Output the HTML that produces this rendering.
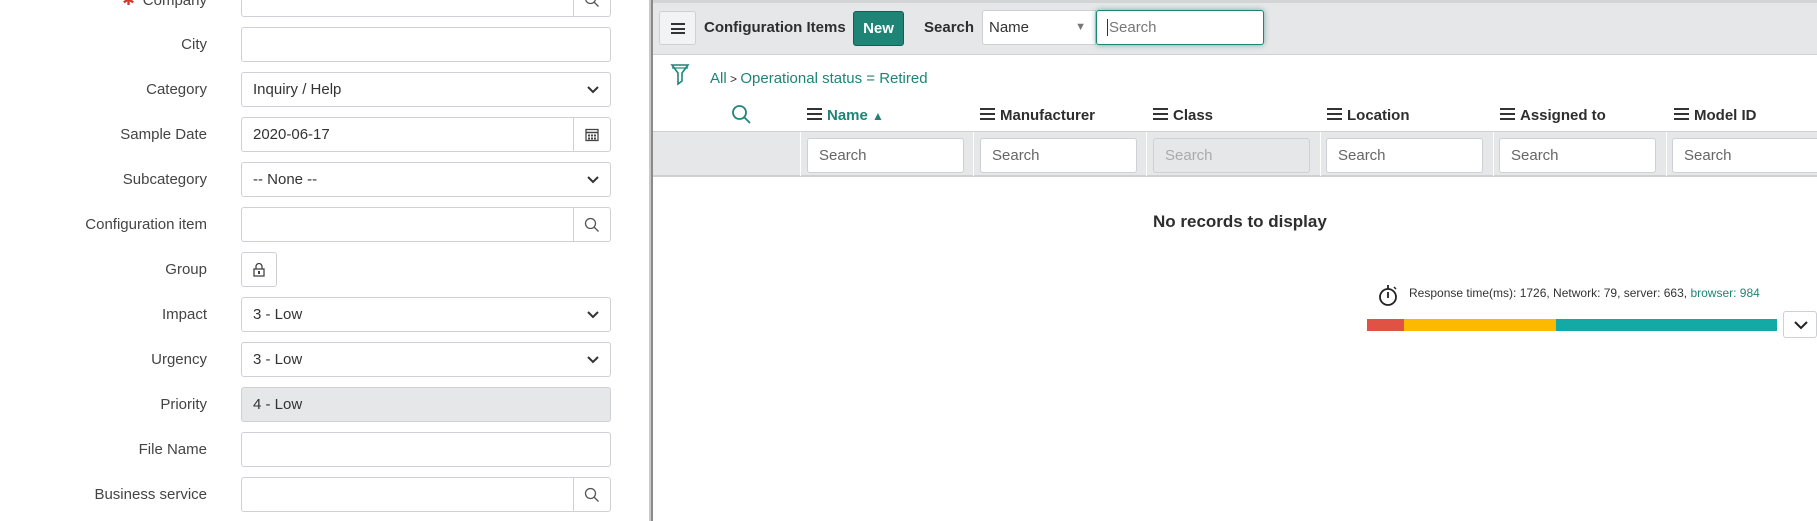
<!DOCTYPE html>
<html><head><meta charset="utf-8"><style>
*{box-sizing:border-box;margin:0;padding:0}
body{width:1817px;height:521px;overflow:hidden;background:#fff;font-family:"Liberation Sans",Arial,sans-serif;position:relative;color:#2e2e2e}
.a{position:absolute}
.lbl{position:absolute;right:1610px;font-size:15px;color:#444;text-align:right;white-space:nowrap}
.inp{position:absolute;left:241px;width:370px;height:35px;border:1px solid #cdd0d4;border-radius:3px;background:#fff;font-size:15px;color:#333;padding:0 11px;line-height:33px}
.btnr{position:absolute;right:0;top:0;width:37px;height:33px;border-left:1px solid #cdd0d4;display:flex;align-items:center;justify-content:center}
.chev{position:absolute;right:10px;top:10px}
.hdr{position:absolute;top:107px;font-size:15px;font-weight:bold;color:#2e2e2e;white-space:nowrap}
.hdr i{display:inline-block;width:15px;height:12px;border-top:2px solid #333;border-bottom:2px solid #333;position:relative;margin-right:5px;vertical-align:0}
.hdr i:after{content:"";position:absolute;left:0;right:0;top:3px;height:2px;background:#333}
.fs{position:absolute;top:138px;width:157px;height:35px;border:1px solid #cdd0d4;border-radius:3px;background:#fff;font-size:15px;color:#666;padding-left:11px;line-height:33px}
</style></head><body>
<!-- left form -->
<div class="lbl" style="top:-9px"><span style="color:#d0392b;margin-right:8px">✱</span>Company</div>
<div class="inp" style="top:-18px"><div class="btnr"><svg width="16" height="16"><circle cx="6.5" cy="6.5" r="5" fill="none" stroke="#555" stroke-width="1.3"/><path d="M10 10l4.5 4.5" stroke="#555" stroke-width="1.3"/></svg></div></div>
<div class="lbl" style="top:36px">City</div><div class="inp" style="top:27px"></div>
<div class="lbl" style="top:81px">Category</div><div class="inp" style="top:72px">Inquiry / Help<svg class="chev" width="14" height="14"><path d="M2 4l5 5 5-5" fill="none" stroke="#333" stroke-width="2"/></svg></div>
<div class="lbl" style="top:126px">Sample Date</div><div class="inp" style="top:117px">2020-06-17<div class="btnr"><svg width="14" height="14"><rect x="1" y="1.5" width="12" height="11" fill="none" stroke="#444" stroke-width="1.3"/><path d="M1 4.5h12" stroke="#444" stroke-width="1.5"/><g fill="#444"><rect x="3" y="6.5" width="2" height="2"/><rect x="6" y="6.5" width="2" height="2"/><rect x="9" y="6.5" width="2" height="2"/><rect x="3" y="9.5" width="2" height="2"/><rect x="6" y="9.5" width="2" height="2"/><rect x="9" y="9.5" width="2" height="2"/></g></svg></div></div>
<div class="lbl" style="top:171px">Subcategory</div><div class="inp" style="top:162px">-- None --<svg class="chev" width="14" height="14"><path d="M2 4l5 5 5-5" fill="none" stroke="#333" stroke-width="2"/></svg></div>
<div class="lbl" style="top:216px">Configuration item</div><div class="inp" style="top:207px"><div class="btnr"><svg width="16" height="16"><circle cx="6.5" cy="6.5" r="5" fill="none" stroke="#555" stroke-width="1.3"/><path d="M10 10l4.5 4.5" stroke="#555" stroke-width="1.3"/></svg></div></div>
<div class="lbl" style="top:261px">Group</div><div class="inp" style="top:252px;width:36px;padding:0"><svg style="position:absolute;left:10px;top:9px" width="14" height="15"><path d="M4 7V4.5a3 3 0 0 1 6 0V7" fill="none" stroke="#444" stroke-width="1.3"/><rect x="2" y="7" width="10" height="7" fill="none" stroke="#444" stroke-width="1.3"/><rect x="6" y="9" width="2" height="3" fill="#444"/></svg></div>
<div class="lbl" style="top:306px">Impact</div><div class="inp" style="top:297px">3 - Low<svg class="chev" width="14" height="14"><path d="M2 4l5 5 5-5" fill="none" stroke="#333" stroke-width="2"/></svg></div>
<div class="lbl" style="top:351px">Urgency</div><div class="inp" style="top:342px">3 - Low<svg class="chev" width="14" height="14"><path d="M2 4l5 5 5-5" fill="none" stroke="#333" stroke-width="2"/></svg></div>
<div class="lbl" style="top:396px">Priority</div><div class="inp" style="top:387px;background:#e6e7e9">4 - Low</div>
<div class="lbl" style="top:441px">File Name</div><div class="inp" style="top:432px"></div>
<div class="lbl" style="top:486px">Business service</div><div class="inp" style="top:477px"><div class="btnr"><svg width="16" height="16"><circle cx="6.5" cy="6.5" r="5" fill="none" stroke="#555" stroke-width="1.3"/><path d="M10 10l4.5 4.5" stroke="#555" stroke-width="1.3"/></svg></div></div>
<!-- divider -->
<div class="a" style="left:649px;top:0;width:2px;height:521px;background:#c8c9cb"></div>
<div class="a" style="left:651px;top:0;width:2px;height:521px;background:#8a8a8a"></div>
<!-- right header -->
<div class="a" style="left:653px;top:0;width:1164px;height:55px;background:#e6e7e9;border-top:3px solid #d3d4d6;border-bottom:1px solid #cfd0d2"></div>
<div class="a" style="left:659px;top:11px;width:37px;height:34px;border:1px solid #cdd0d4;border-radius:3px;background:#f2f3f4"><div style="position:absolute;left:11px;top:11px;width:14px;height:11px;border-top:2px solid #333;border-bottom:2px solid #333"></div><div style="position:absolute;left:11px;top:15.5px;width:14px;height:2px;background:#333"></div></div>
<div class="a" style="left:704px;top:19px;font-size:15px;font-weight:bold;color:#2e2e2e">Configuration Items</div>
<div class="a" style="left:853px;top:11px;width:51px;height:35px;background:#1f8476;border:1px solid #155e54;border-radius:3px;color:#fff;font-size:15px;font-weight:bold;text-align:center;line-height:33px">New</div>
<div class="a" style="left:924px;top:19px;font-size:15px;font-weight:bold;color:#2e2e2e">Search</div>
<div class="a" style="left:982px;top:10px;width:114px;height:35px;background:#fff;border:1px solid #cdd0d4;border-radius:3px 0 0 3px;font-size:15px;color:#333;padding-left:6px;line-height:33px">Name<span style="position:absolute;right:9px;top:0;font-size:11px;color:#777">▼</span></div>
<div class="a" style="left:1096px;top:10px;width:168px;height:35px;background:#fff;border:1px solid #1f8476;border-radius:3px;box-shadow:0 0 6px rgba(31,132,118,.6);font-size:15px;color:#777;padding-left:10px;line-height:33px"><span style="border-left:1px solid #333;padding-left:1px">Search</span></div>
<!-- breadcrumb -->
<svg class="a" style="left:670px;top:63px" width="20" height="24"><path d="M2 2h16l-6 8v8l-4 3V10z" fill="none" stroke="#1f8476" stroke-width="1.6"/><path d="M2 5h16" stroke="#1f8476" stroke-width="1.2"/></svg>
<div class="a" style="left:710px;top:70px;font-size:15px;color:#1f8476">All<span style="color:#333;font-size:12px"> &gt; </span>Operational status = Retired</div>
<!-- column headers -->
<svg class="a" style="left:731px;top:104px" width="22" height="22"><circle cx="8.5" cy="8.5" r="6.5" fill="none" stroke="#1f8476" stroke-width="1.8"/><path d="M13 13l6 6" stroke="#1f8476" stroke-width="1.8"/></svg>
<div class="hdr" style="left:807px;color:#1f8476"><i style="border-color:#333"></i>Name <span style="font-size:12px">▲</span></div>
<div class="hdr" style="left:980px"><i></i>Manufacturer</div>
<div class="hdr" style="left:1153px"><i></i>Class</div>
<div class="hdr" style="left:1327px"><i></i>Location</div>
<div class="hdr" style="left:1500px"><i></i>Assigned to</div>
<div class="hdr" style="left:1674px"><i></i>Model ID</div>
<div class="a" style="left:653px;top:131px;width:1164px;height:46px;background:#e6e7e9;border-top:1px solid #cfd0d2;border-bottom:2px solid #cfd0d2"></div>
<div class="a" style="left:800px;top:132px;width:1px;height:44px;background:#fff"></div>
<div class="a" style="left:973px;top:132px;width:1px;height:44px;background:#fff"></div>
<div class="a" style="left:1146px;top:132px;width:1px;height:44px;background:#fff"></div>
<div class="a" style="left:1320px;top:132px;width:1px;height:44px;background:#fff"></div>
<div class="a" style="left:1493px;top:132px;width:1px;height:44px;background:#fff"></div>
<div class="a" style="left:1666px;top:132px;width:1px;height:44px;background:#fff"></div>
<div class="fs" style="left:807px">Search</div>
<div class="fs" style="left:980px">Search</div>
<div class="fs" style="left:1153px;background:#e6e7e9;color:#aaa">Search</div>
<div class="fs" style="left:1326px">Search</div>
<div class="fs" style="left:1499px">Search</div>
<div class="fs" style="left:1672px;width:160px">Search</div>
<div class="a" style="left:1153px;top:212px;font-size:17px;font-weight:bold;color:#2e2e2e">No records to display</div>
<!-- response time -->
<svg class="a" style="left:1378px;top:283px" width="22" height="24"><circle cx="10" cy="14" r="8" fill="none" stroke="#222" stroke-width="1.8"/><path d="M10 2v4M10 9v6" stroke="#222" stroke-width="1.8"/><path d="M16 4l2 2" stroke="#222" stroke-width="1.5"/></svg>
<div class="a" style="left:1409px;top:286px;font-size:12px;color:#333;white-space:nowrap">Response time(ms): 1726, Network: 79, server: 663, <span style="color:#1f8476">browser: 984</span></div>
<div class="a" style="left:1367px;top:319px;width:37px;height:12px;background:#e05243"></div>
<div class="a" style="left:1404px;top:319px;width:152px;height:12px;background:#fdb900"></div>
<div class="a" style="left:1556px;top:319px;width:221px;height:12px;background:#13aaa5"></div>
<div class="a" style="left:1783px;top:311px;width:34px;height:27px;border:1px solid #cdd0d4;border-radius:3px;background:#fff"><svg style="position:absolute;left:9px;top:7px" width="16" height="12"><path d="M2 3l6 6 6-6" fill="none" stroke="#222" stroke-width="2"/></svg></div>
</body></html>
